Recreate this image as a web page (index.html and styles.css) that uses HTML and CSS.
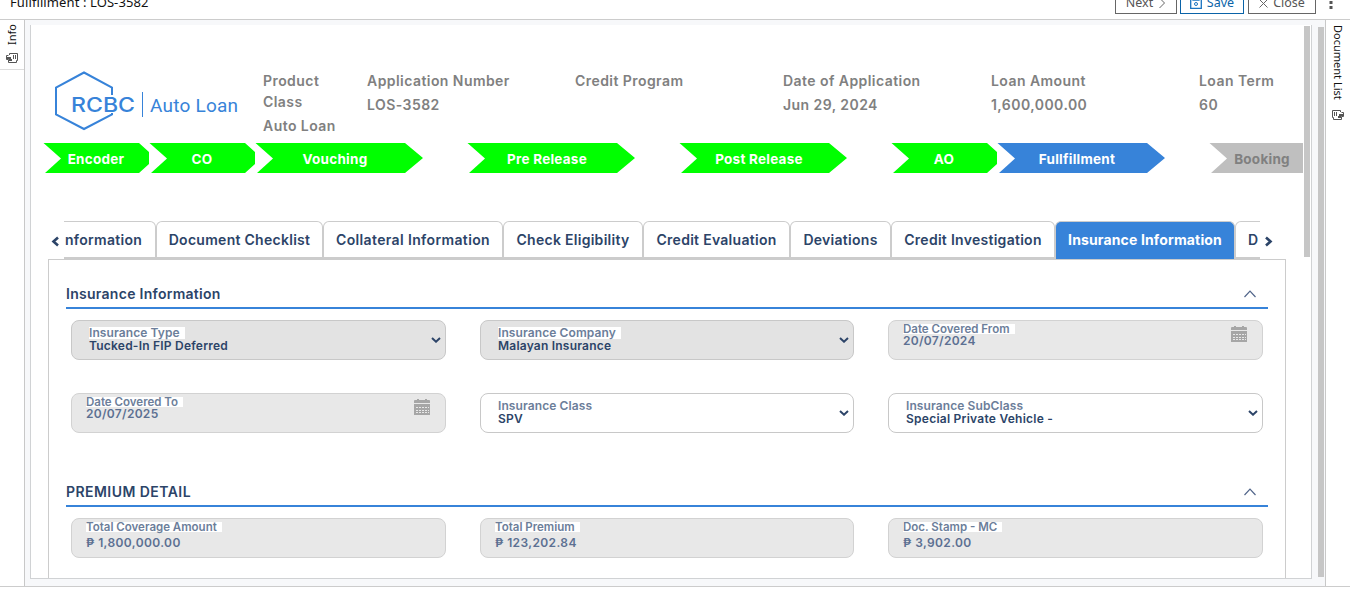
FILE: index.html
```html
<!DOCTYPE html>
<html lang="en">
<head>
<meta charset="utf-8">
<title>Fullfillment : LOS-3582</title>
<link rel="stylesheet" href="styles.css">
</head>
<body>
<svg width="0" height="0" class="defs">
  <symbol id="calendar" viewBox="0 0 16 16"><path d="M1 1h2V0h2v1h6V0h2v1h2q1 0 1 1v2H0V2q0-1 1-1zM0 5h16v11H0z" fill="#a6a6a6"/><path d="M2 8.500h13M2 11.500h13M2 13.500h13" stroke="#e8e8e8" stroke-dasharray="2 1"/></symbol>
  <symbol id="down" viewBox="0 0 10 6"><path d="M1 1l4 3.700 4-3.700" fill="none" stroke="#2c4468" stroke-width="2"/></symbol>
  <symbol id="up" viewBox="0 0 12 8"><path d="M.5 7L6 1.200 11.500 7" fill="none" stroke="#51658a" stroke-width="1.200"/></symbol>
  <symbol id="docs" viewBox="0 0 12 10"><path d="M3.500 .5h8v7M7.500 2v4M9.500 2v4M3.500 2V.5M2.500 2.500H.5v4h2v3h8v-2h1" fill="none" stroke="#555" stroke-width="1"/><path d="M1 4h4v2h1v2H3V6H1z" fill="#555"/></symbol>
</svg>
<header class="topbar">
  <div class="title">Fullfillment : LOS-3582</div>
  <div class="actions">
    <button class="btn next">Next <svg width="8" height="12" viewBox="0 0 8 12"><path d="M1.500 1L6.500 6l-5 5" fill="none" stroke="#666"/></svg></button>
    <button class="btn save"><svg width="12" height="12" viewBox="0 0 12 12"><path d="M.7.7h10.600v10.600H.7zM3 .5v2.500h6V.5" fill="none" stroke="#1a73c0" stroke-width="1.300"/><circle cx="6" cy="7" r="1.500" fill="none" stroke="#1a73c0"/></svg> Save</button>
    <button class="btn close"><svg width="9" height="9" viewBox="0 0 9 9"><path d="M.5.5l8 8M8.500.5l-8 8" stroke="#666"/></svg> Close</button>
    <svg class="dots" width="4" height="12" viewBox="0 0 4 12"><path d="M.5 0h3v3h-3zM.5 5h3v3h-3z" fill="#555"/></svg>
  </div>
</header>
<main class="workspace">
  <aside class="rail left"><div class="rail-tab"><span>Info</span><svg width="12" height="10"><use href="#docs"/></svg></div></aside>
  <section class="center">
    <div class="frame">
      <div class="page">
        <div class="summary">
          <svg class="logo" width="188" height="64" viewBox="0 0 188 64">
            <path d="M58 25V17.500L30 2.500 2 17.500v27L30 59l28-14.500V43" fill="none" stroke="#3783d9" stroke-width="2"/>
            <path d="M88.500 22v25" stroke="#3783d9"/>
            <text class="brand" x="17" y="42" textLength="64" lengthAdjust="spacingAndGlyphs">RCBC</text>
            <text class="product" x="96" y="42" textLength="88">Auto Loan</text>
          </svg>
          <dl class="first"><dt>Product Class</dt><dd>Auto Loan</dd></dl>
          <dl><dt>Application Number</dt><dd>LOS-3582</dd></dl>
          <dl><dt>Credit Program</dt><dd></dd></dl>
          <dl><dt>Date of Application</dt><dd>Jun 29, 2024</dd></dl>
          <dl><dt>Loan Amount</dt><dd>1,600,000.00</dd></dl>
          <dl><dt>Loan Term</dt><dd>60</dd></dl>
        </div>
        <div class="stages">
          <div class="stage"><span>Encoder</span></div>
          <div class="stage"><span>CO</span></div>
          <div class="stage wide"><span>Vouching</span></div>
          <div class="stage wide"><span>Pre Release</span></div>
          <div class="stage wide"><span>Post Release</span></div>
          <div class="stage"><span>AO</span></div>
          <div class="stage wide current"><span>Fullfillment</span></div>
          <div class="stage pending"><span>Booking</span></div>
        </div>
        <nav class="tabbar">
          <svg class="arrow" width="9" height="11" viewBox="0 0 9 11"><path d="M7 1.500L2.500 5.500 7 9.500" fill="none" stroke="#2c4468" stroke-width="2.600"/></svg>
          <div class="tabs">
            <a class="tab t1">nformation</a><a class="tab t2">Document Checklist</a><a class="tab t3">Collateral Information</a><a class="tab t4">Check Eligibility</a><a class="tab t5">Credit Evaluation</a><a class="tab t6">Deviations</a><a class="tab t7">Credit Investigation</a><a class="tab t8 active">Insurance Information</a><a class="tab t9">D</a>
          </div>
          <svg class="arrow nextarrow" width="9" height="11" viewBox="0 0 9 11"><path d="M2 1.500L6.500 5.500 2 9.500" fill="none" stroke="#2c4468" stroke-width="2.600"/></svg>
        </nav>
        <div class="sheet">
          <section class="group">
            <h2><span>Insurance Information</span><svg width="12" height="8"><use href="#up"/></svg></h2>
            <div class="fields">
              <div class="field select off"><label>Insurance Type</label><b>Tucked-In FIP Deferred</b><svg class="down" width="10" height="6"><use href="#down"/></svg></div>
              <div class="field select off"><label>Insurance Company</label><b>Malayan Insurance</b><svg class="down" width="10" height="6"><use href="#down"/></svg></div>
              <div class="field date"><label>Date Covered From</label><b>20/07/2024</b><svg class="cal" width="16" height="16"><use href="#calendar"/></svg></div>
              <div class="field date"><label>Date Covered To</label><b>20/07/2025</b><svg class="cal" width="16" height="16"><use href="#calendar"/></svg></div>
              <div class="field select"><label>Insurance Class</label><b>SPV</b><svg class="down" width="10" height="6"><use href="#down"/></svg></div>
              <div class="field select"><label>Insurance SubClass</label><b>Special Private Vehicle -</b><svg class="down" width="10" height="6"><use href="#down"/></svg></div>
            </div>
          </section>
          <section class="group">
            <h2 class="caps"><span>PREMIUM DETAIL</span><svg width="12" height="8"><use href="#up"/></svg></h2>
            <div class="fields">
              <div class="field money"><label>Total Coverage Amount</label><b>₱ 1,800,000.00</b></div>
              <div class="field money"><label>Total Premium</label><b>₱ 123,202.84</b></div>
              <div class="field money"><label>Doc. Stamp - MC</label><b>₱ 3,902.00</b></div>
            </div>
          </section>
        </div>
      </div>
      <div class="inner-scroll"></div>
    </div>
    <div class="outer-scroll"></div>
  </section>
  <aside class="rail right"><span>Document List</span><svg width="12" height="10"><use href="#docs"/></svg></aside>
</main>
</body>
</html>
```
FILE: styles.css
```css
* { box-sizing: border-box; }
body { margin: 0; height: 602px; overflow: hidden; background: #fff; font-family: Inter, "Open Sans", sans-serif; }
.defs { display: block; }
.topbar { height: 20px; border-bottom: 1px solid #ccc; display: flex; justify-content: space-between; overflow: hidden; font: 13px/18px "Noto Sans", "Open Sans", sans-serif; color: #111; }
.title { padding-left: 10px; margin-top: -7px; letter-spacing: .1px; }
.actions { display: flex; gap: 3px; margin: -10px 17px 0 0; }
.btn { height: 24px; padding: 2px 0 0; background: #fff; border: 1px solid #666; font: 12.500px/18px "Noto Sans", "Open Sans", sans-serif; color: #555; display: flex; align-items: center; justify-content: center; gap: 5px; }
.next { width: 62px; }
.save { width: 64px; border-color: #0a63a8; color: #0a63a8; }
.close { width: 68px; margin-left: 1px; }
.dots { margin: 11px 0 0 10px; }

.workspace { height: 567px; display: flex; border-bottom: 1px solid #ccc; }
.rail { width: 25px; font: 11px/14px "Noto Sans", "Open Sans", sans-serif; color: #111; display: flex; flex-direction: column; align-items: center; }
.rail span { writing-mode: vertical-rl; }
.left { border-right: 1px solid #c8c8c8; }
.rail-tab { width: 24px; height: 50px; border-bottom: 1px solid #ddd; display: flex; flex-direction: column; align-items: center; gap: 8px; padding-top: 5px; }
.rail-tab span { transform: rotate(180deg); height: 20px; }
.right { border-left: 1px solid #c8c8c8; padding-top: 5px; }
.right span { height: 85px; }
.right svg { transform: scaleX(-1); }
.center { flex: 1; background: #f7f8fa; display: flex; padding: 5px 0 0 5px; }
.frame { width: 1282px; height: 554px; background: #fff; border: 1px solid #d0d2d4; border-top: 0; display: flex; overflow: hidden; }
.page { width: 1272px; overflow: hidden; flex: none; }
.inner-scroll { width: 6px; height: 231px; margin: 1px 0 0 1px; background: #c6c6c6; }
.outer-scroll { width: 6px; height: 550px; margin: 2px 0 0 6px; background: #c6c6c6; }

.summary { display: flex; height: 118px; padding: 45px 0 0 23px; }
.logo { width: 188px; height: 64px; flex: none; margin-right: 21px; }
.brand { font: 500 20px Inter, sans-serif; fill: #3783d9; }
.product { font: 19px Roboto, sans-serif; fill: #3783d9; }
.summary dl { margin: 0; width: 208px; flex: none; font-size: 14px; line-height: 21px; font-weight: 600; letter-spacing: .44px; color: #808080; }
.summary .first { width: 104px; padding-right: 25px; }
.summary dd { margin: 3px 0 0; white-space: nowrap; }

.stages { display: grid; grid-template-columns: 106px 106px 212px 212px 212px 106px 212px 106px; padding-left: 12px; width: 1285px; height: 30px; }
.stage { width: 106px; height: 30px; background: #0f0; color: #fff; font-size: 13.500px; letter-spacing: .25px; line-height: 32px; font-weight: 700; text-align: center; clip-path: polygon(.5px 0, 96px 0, 106px 9px, 106px 21px, 96px 30px, 2px 30px, 18px 15.500px); }
.stage.wide { width: 168px; clip-path: polygon(.5px 0, 150px 0, 168px 15px, 150px 30px, 2px 30px, 18px 15.500px); }
.wide span { margin-left: -8px; }
.stage.current { background: #3783d9; }
.stage.pending { background: #bfbfbf; color: #808080; clip-path: polygon(.5px 0, 106px 0, 106px 30px, 2px 30px, 18px 15.500px); }

.tabbar { display: flex; height: 38px; margin-top: 48px; padding-left: 20px; position: relative; z-index: 1; }
.arrow { flex: none; margin: 15px 4px 0 0; }
.nextarrow { margin: 15px 0 0 4px; }
.tabs { width: 1196px; overflow: hidden; display: flex; flex: none; }
.tab { flex: none; height: 38px; border: 1px solid #ccc; border-bottom: 2px solid #ccc; border-radius: 6px 6px 0 0; background: #fff; color: #2c4468; font-size: 14px; letter-spacing: .28px; line-height: 36px; font-weight: 600; text-align: center; white-space: nowrap; }
.t1 { width: 92px; border-left: 0; border-top-left-radius: 0; text-align: left; padding-left: 1px; }
.t2 { width: 167px; }
.t3 { width: 180px; letter-spacing: .36px; }
.t4 { width: 140px; }
.t5 { width: 147px; }
.t6 { width: 101px; }
.t7 { width: 164px; }
.t8 { width: 180px; }
.t9 { width: 80px; text-align: left; padding-left: 12px; }
.tab.active { background: #3783d9; color: #fff; border-bottom: 0; font-weight: 700; letter-spacing: .14px; }

.sheet { width: 1238px; height: 330px; margin-left: 17px; border: 1px solid #ccc; padding: 19px 17px 0; }
.group { height: 198px; }
h2 { margin: 0; height: 30px; display: flex; justify-content: space-between; padding: 0 12px 0 0; border-bottom: 2px solid #3783d9; color: #2c4468; font-size: 14px; line-height: 29px; letter-spacing: .28px; font-weight: 600; }
.caps { letter-spacing: .45px; }
h2 svg { margin-top: 11px; }
.fields { display: grid; grid-template-columns: 375px 374px 375px; column-gap: 34px; row-gap: 33px; padding: 11px 5px 0; }
.field { position: relative; height: 40px; border: 1px solid #d2d2d2; border-radius: 8px; background: #e8e8e8; display: flex; flex-direction: column; align-items: flex-start; padding-left: 14px; white-space: nowrap; }
.field label { background: #fff; padding-right: 5px; font-size: 11.500px; line-height: 10px; height: 10px; margin-top: 3px; font-weight: 600; color: #6c7e9a; }
.field b { font-size: 12px; line-height: 14px; font-weight: 600; color: #5c7092; letter-spacing: .3px; }
.select { padding-left: 17px; background: #fff; border-color: #c8c8c8; }
.off { background: #e3e3e3; }
.select label { margin-top: 6px; font-size: 12px; line-height: 12px; height: 12px; letter-spacing: .1px; }
.select b { color: #2c4468; letter-spacing: .25px; }
.off b { letter-spacing: .22px; }
.money b { margin-top: 4px; letter-spacing: .38px; }
.down { position: absolute; right: 4px; top: 16px; }
.cal { position: absolute; right: 15px; top: 5px; }
```
